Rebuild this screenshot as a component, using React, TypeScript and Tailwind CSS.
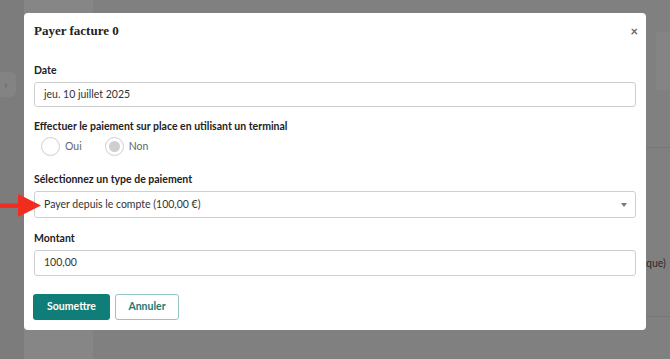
export default function App() {
  return (
    <div className="relative w-[670px] h-[359px] overflow-hidden bg-[#808080] font-['Lato','Noto_Sans',sans-serif]">
      {/* page behind the overlay */}
      <div className="flex h-full">
        <div className="w-[24px] bg-[#7c7c7c] flex flex-col">
          <div className="mt-[72px] ml-[-4px] w-[20px] h-[25px] rounded-[5px] bg-[#838383] flex items-center justify-center text-[10px] text-[#3f5f5c]">
            ›
          </div>
        </div>
        <div className="w-[69px] bg-[#868686]" />
        <div className="flex-1 flex flex-col items-end">
          <div className="mt-[32px] w-[14px] h-[58px] bg-[#848484]" />
          <div className="mt-[57px] w-[24px] h-px bg-[#767676]" />
          <div className="mt-[108px] w-[24px] text-[10.5px] text-[#2a2a2a]">que)</div>
          <div className="mt-[44px] w-[24px] h-px bg-[#767676]" />
        </div>
      </div>

      {/* modal */}
      <div className="absolute left-[24px] top-[13px] w-[622px] h-[317px] bg-white rounded-[4px] px-[10px] pt-2 flex flex-col">
        <div className="flex items-center justify-between h-[20px]">
          <h2 className="font-['Liberation_Serif',serif] font-bold text-[13px] text-[#222]">Payer facture 0</h2>
          <span className="mr-[-2px] text-[13px] font-bold text-[#666] leading-none">×</span>
        </div>

        <label className="mt-[22px] text-[10.5px] leading-[14px] font-bold text-[#222]">Date</label>
        <div className="mt-[5px] h-[25px] border border-[#cfcfcf] rounded-[3px] flex items-center px-[9px] text-[10.5px] text-[#333]">
          jeu. 10 juillet 2025
        </div>

        <label className="mt-[12px] text-[10.5px] leading-[14px] font-bold text-[#222]">
          Effectuer le paiement sur place en utilisant un terminal
        </label>
        <div className="mt-[4px] flex items-center gap-[5px] pl-[7px] h-[19px]">
          <span className="w-[19px] h-[19px] rounded-full border border-[#cfcfcf]" />
          <span className="text-[10.5px] text-[#666] mr-[18px]">Oui</span>
          <span className="w-[19px] h-[19px] rounded-full border border-[#cfcfcf] flex items-center justify-center">
            <span className="w-[11px] h-[11px] rounded-full bg-[#cfcfcf]" />
          </span>
          <span className="text-[10.5px] text-[#666]">Non</span>
        </div>

        <label className="mt-[16px] text-[10.5px] leading-[14px] font-bold text-[#222]">
          Sélectionnez un type de paiement
        </label>
        <div className="mt-[5px] h-[27px] border border-[#cfcfcf] rounded-[3px] flex items-center justify-between pl-[9px] pr-[8px] text-[10.5px] text-[#333]">
          <span>Payer depuis le compte (100,00 €)</span>
          <span className="w-0 h-0 border-l-[3px] border-r-[3px] border-t-[4px] border-l-transparent border-r-transparent border-t-[#777]" />
        </div>

        <label className="mt-[13px] text-[10.5px] leading-[14px] font-bold text-[#222]">Montant</label>
        <div className="mt-[5px] h-[26px] border border-[#cfcfcf] rounded-[3px] flex items-center px-[9px] text-[10.5px] text-[#333]">
          100,00
        </div>

        <div className="mt-[18px] flex gap-[5px] -ml-px">
          <button className="w-[77px] h-[26px] rounded-[3px] bg-[#0f7d78] text-white text-[10.5px] font-bold">
            Soumettre
          </button>
          <button className="w-[64px] h-[26px] rounded-[3px] border border-[#93c6c3] bg-white text-[#1a7a76] text-[10.5px] font-bold">
            Annuler
          </button>
        </div>
      </div>

      {/* red arrow */}
      <svg className="absolute left-0 top-[194px] z-10" width="42" height="24" viewBox="0 0 42 24">
        <rect x="0" y="9.5" width="20" height="4.5" fill="#f02d1f" />
        <polygon points="18,0 41,11.5 18,23" fill="#f02d1f" />
      </svg>
    </div>
  );
}
